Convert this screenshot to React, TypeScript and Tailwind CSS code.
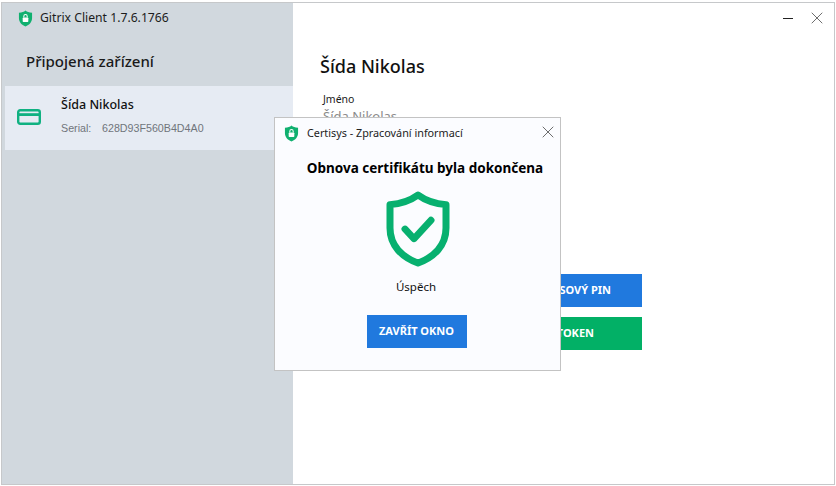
import { X } from "lucide-react";

const ShieldLock = ({ className }: { className: string }) => (
  <svg viewBox="0 0 16 18" className={className}>
    <path d="M8 0.4 C9.6 1.8 11.8 2.6 15 2.8 V8.5 C15 12.8 12.2 15.8 8 17.6 C3.8 15.8 1 12.8 1 8.5 V2.8 C4.2 2.6 6.4 1.8 8 0.4 Z" fill="#10b06f" />
    <rect x="5" y="7.8" width="6" height="5" rx="0.8" fill="#fff" />
    <path d="M6.2 8 V6.6 a1.8 1.8 0 0 1 3.6 0 V8" fill="none" stroke="#fff" strokeWidth="1.1" />
  </svg>
);

export default function App() {
  return (
    <div className="w-[836px] h-[486px] bg-white pt-[2px] pl-[1px] pr-[1px] pb-[1px] font-['Noto_Sans',sans-serif] overflow-hidden">
      <div className="relative w-full h-full border border-[#c6c8ca] flex bg-white">
        {/* sidebar */}
        <div className="w-[291px] shrink-0 bg-[#d1d8de] flex flex-col">
          <div className="flex items-center h-[30px] pl-[16px] gap-[7px] pt-[1px]">
            <ShieldLock className="w-[15px] h-[17px]" />
            <span className="text-[12.2px] text-[#1c1c1c]">Gitrix Client 1.7.6.1766</span>
          </div>
          <div className="pl-[24px] pt-[14px] h-[53px] text-[15px] font-medium text-[#1a1a1a] leading-[28px]">Připojená zařízení</div>
          <div className="ml-[3px] h-[64px] bg-[#e6ebf3] flex items-center pl-[12px]">
            <svg viewBox="0 0 24 16" className="w-[24px] h-[16px] mt-[-2px]" fill="none" stroke="#10b181" strokeWidth="2.4">
              <rect x="1.2" y="1.2" width="21.6" height="13.6" rx="2" />
              <path d="M1 5.6 H23" strokeWidth="2.8" />
            </svg>
            <div className="ml-[20px] flex flex-col mt-[-6px]">
              <span className="text-[12.5px] font-medium text-[#111] leading-[18px]">Šída Nikolas</span>
              <div className="flex text-[10.7px] text-[#70757b] mt-[7px] leading-[14px] font-['Liberation_Sans',sans-serif]">
                <span className="w-[41px]">Serial:</span>
                <span>628D93F560B4D4A0</span>
              </div>
            </div>
          </div>
        </div>

        {/* main panel */}
        <div className="relative flex-1 flex flex-col">
          <div className="flex justify-end items-center h-[30px] pr-[7px] gap-[14px]">
            <div className="w-[10px] h-[1px] bg-[#222]" />
            <X className="w-[20px] h-[20px] text-[#222]" strokeWidth={0.8} />
          </div>
          <div className="pl-[27px] pt-[19px]">
            <div className="text-[18px] font-medium text-[#111] leading-[28px]">Šída Nikolas</div>
            <div className="pl-[3px] pt-[12px] text-[10.5px] text-[#1a1a1a] leading-[14px]">Jméno</div>
            <div className="pl-[3px] pt-[1px] text-[13px] text-[#8a8a8a] leading-[18px]">Šída Nikolas</div>
          </div>
          <div className="absolute left-[220px] top-[271px] flex flex-col gap-[10px] w-[129px]">
            <div className="h-[33px] bg-[#2079de] text-white text-[11px] font-bold flex items-center justify-end pr-[31px] whitespace-nowrap">ČASOVÝ PIN</div>
            <div className="h-[33px] bg-[#02b066] text-white text-[11px] font-bold flex items-center justify-end pr-[48px] whitespace-nowrap">TOKEN</div>
          </div>
        </div>

        {/* dialog */}
        <div className="absolute left-[272px] top-[114px] w-[287px] h-[254px] bg-[#fbfcff] border border-[#c3c3c3] flex flex-col items-center z-10">
          <div className="w-full flex items-center h-[30px] pl-[9px] pr-[2px]">
            <ShieldLock className="w-[15px] h-[17px]" />
            <span className="ml-[8px] text-[10.8px] text-[#222]">Certisys - Zpracování informací</span>
            <X className="ml-auto w-[20px] h-[20px] text-[#222] mt-[-2px]" strokeWidth={0.8} />
          </div>
          <div className="mt-[10px] ml-[15px] text-[13.5px] font-bold text-black leading-[20px] whitespace-nowrap">Obnova certifikátu byla dokončena</div>
          <svg viewBox="0 0 64 78" preserveAspectRatio="none" className="w-[64px] h-[76px] mt-[13px]" fill="none">
            <path d="M32 4 C40 10 49 13 60 14 V38 C60 56 48 68 32 74 C16 68 4 56 4 38 V14 C15 13 24 10 32 4 Z" stroke="#07b06f" strokeWidth="7" strokeLinejoin="round" />
            <path d="M19 39 L28 49 L45 30" stroke="#07b06f" strokeWidth="7" strokeLinecap="round" strokeLinejoin="round" />
          </svg>
          <div className="mt-[12px] mr-[3px] text-[11.5px] text-[#111] leading-[16px]">Úspěch</div>
          <div className="mt-[20px] mr-[2px] w-[100px] h-[33px] bg-[#2079de] text-white text-[11px] font-bold flex items-center justify-center whitespace-nowrap">ZAVŘÍT OKNO</div>
        </div>
      </div>
    </div>
  );
}
